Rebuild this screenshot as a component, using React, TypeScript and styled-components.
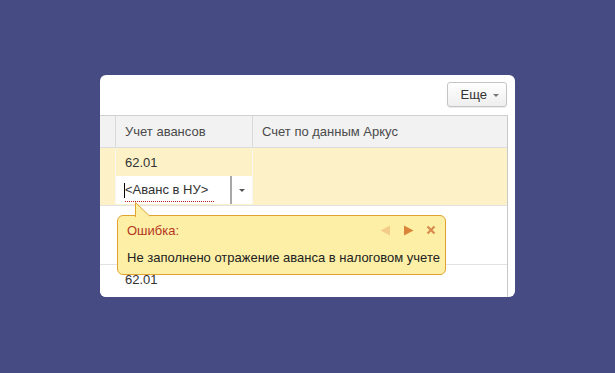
import React from "react";
import styled, { createGlobalStyle } from "styled-components";

const Global = createGlobalStyle`
  html, body { margin: 0; padding: 0; }
  body {
    background: #464b83;
    font-family: "Liberation Sans", Arial, sans-serif;
    font-size: 13px;
    color: #333;
  }
  #root { width: 615px; height: 373px; overflow: hidden; }
`;

const Stage = styled.div`
  width: 615px;
  height: 373px;
  padding: 75px 0 0 100px;
  box-sizing: border-box;
`;

const Panel = styled.div`
  position: relative;
  width: 415px;
  height: 222px;
  background: #fff;
  border-radius: 6px;
  overflow: hidden;
  display: flex;
  flex-direction: column;
`;

const TopBar = styled.div`
  flex: 0 0 40px;
  height: 40px;
  box-sizing: border-box;
  padding: 7px 8px 0 0;
  display: flex;
  justify-content: flex-end;
  align-items: flex-start;
`;

const MoreButton = styled.div`
  width: 60px;
  height: 25px;
  box-sizing: border-box;
  border: 1px solid #c4c4c4;
  border-radius: 3px;
  background: linear-gradient(#ffffff, #eeeeee);
  box-shadow: 0 1px 1px rgba(0, 0, 0, 0.08);
  display: flex;
  align-items: center;
  justify-content: flex-end;
  padding-right: 7px;
  gap: 6px;
  color: #333;
  font-size: 13px;
`;

const Caret = styled.span<{ $color?: string }>`
  width: 0;
  height: 0;
  border-left: 3px solid transparent;
  border-right: 3px solid transparent;
  border-top: 3px solid ${(p) => p.$color ?? "#777"};
  margin-top: 1px;
`;

const Table = styled.div`
  width: 408px;
  flex: 1 1 auto;
  min-height: 0;
  overflow: hidden;
  border-top: 1px solid #d0d0d0;
  border-right: 1px solid #c8c8c8;
  box-sizing: border-box;
  display: flex;
  flex-direction: column;
`;

const Grid = styled.div`
  display: grid;
  grid-template-columns: 16px 137px 1fr;
  flex-shrink: 0;
`;

const HeadCell = styled.div`
  height: 32px;
  box-sizing: border-box;
  background: #f2f2f2;
  border-bottom: 1px solid #dcdcdc;
  border-right: 1px solid #dadada;
  padding-left: 9px;
  display: flex;
  align-items: center;
  color: #4a4a4a;
  &:first-child { padding: 0; }
  &:last-child { border-right: none; }
`;

const Row = styled(Grid)<{ $active?: boolean; $h: number }>`
  height: ${(p) => p.$h}px;
  border-bottom: 1px solid #e2e2e2;
  background: ${(p) => (p.$active ? "#fdf2c7" : "#fff")};
`;

const Cell = styled.div<{ $line?: boolean }>`
  border-right: 1px solid ${(p) => (p.$line ? "#f7f7f0" : "transparent")};
  display: flex;
  flex-direction: column;
`;

const Value = styled.div`
  height: 28px;
  padding-left: 9px;
  display: flex;
  align-items: center;
  color: #333;
`;

const Editor = styled.div`
  height: 28px;
  background: #fff;
  display: flex;
  align-items: stretch;
`;

const EditorText = styled.div`
  flex: 1;
  position: relative;
  padding-left: 8px;
  display: flex;
  align-items: center;
  color: #333;
  border-right: 2px solid #a8a8a8;
`;

const Typed = styled.span`
  position: relative;
  border-left: 1px solid #000;
  line-height: 14px;
  padding-bottom: 1px;
  &::after {
    content: "";
    position: absolute;
    left: 0;
    right: -6px;
    bottom: -4px;
    border-bottom: 1px dotted #c02020;
  }
`;

const DropBtn = styled.div`
  width: 20px;
  display: flex;
  align-items: center;
  justify-content: center;
`;

const Tip = styled.div`
  position: absolute;
  left: 17px;
  top: 140px;
  width: 329px;
  height: 60px;
  box-sizing: border-box;
  background: #fdf0a6;
  border: 1px solid #e1a232;
  border-radius: 6px;
  padding: 7px 9px 0 9px;
  display: flex;
  flex-direction: column;
`;

const Tail = styled.svg`
  position: absolute;
  left: 17px;
  top: -14px;
  overflow: visible;
`;

const TipHead = styled.div`
  display: flex;
  align-items: center;
  height: 14px;
`;

const TipTitle = styled.div`
  flex: 1;
  color: #b4361f;
`;

const NavIcons = styled.div`
  display: flex;
  align-items: center;
  gap: 12px;
`;

const TipMsg = styled.div`
  margin-top: 13px;
  color: #222;
  white-space: nowrap;
`;

export default function App() {
  return (
    <>
      <Global />
      <Stage>
        <Panel>
          <TopBar>
            <MoreButton>
              <span>Еще</span>
              <Caret />
            </MoreButton>
          </TopBar>
          <Table>
            <Grid>
              <HeadCell />
              <HeadCell>Учет авансов</HeadCell>
              <HeadCell>Счет по данным Аркус</HeadCell>
            </Grid>
            <Row $active $h={57}>
              <Cell $line />
              <Cell $line>
                <Value>62.01</Value>
                <Editor>
                  <EditorText>
                    <Typed>&lt;Аванс в НУ&gt;</Typed>
                  </EditorText>
                  <DropBtn>
                    <Caret $color="#555" />
                  </DropBtn>
                </Editor>
              </Cell>
              <Cell />
            </Row>
            <Row $h={58}>
              <Cell />
              <Cell />
              <Cell />
            </Row>
            <Row $h={40}>
              <Cell />
              <Cell>
                <Value>62.01</Value>
              </Cell>
              <Cell />
            </Row>
          </Table>
          <Tip>
            <Tail width="16" height="15" viewBox="0 0 16 15">
              <path d="M0.5 15 L0.5 0.5 L14.5 14" fill="#fdf0a6" stroke="#e1a232" strokeWidth="1" />
              <rect x="1" y="13.5" width="13" height="2" fill="#fdf0a6" />
            </Tail>
            <TipHead>
              <TipTitle>Ошибка:</TipTitle>
              <NavIcons>
                <svg width="11" height="11" viewBox="0 0 11 11">
                  <path d="M10 0.5 L0.5 5.5 L10 10.5 Z" fill="#f3cc8a" />
                </svg>
                <svg width="11" height="11" viewBox="0 0 11 11">
                  <path d="M1 0.5 L10.5 5.5 L1 10.5 Z" fill="#d9843a" />
                </svg>
                <svg width="10" height="10" viewBox="0 0 10 10">
                  <path d="M1.5 1.5 L8.5 8.5 M8.5 1.5 L1.5 8.5" stroke="#d98a4e" strokeWidth="2.2" />
                </svg>
              </NavIcons>
            </TipHead>
            <TipMsg>Не заполнено отражение аванса в налоговом учете</TipMsg>
          </Tip>
        </Panel>
      </Stage>
    </>
  );
}
